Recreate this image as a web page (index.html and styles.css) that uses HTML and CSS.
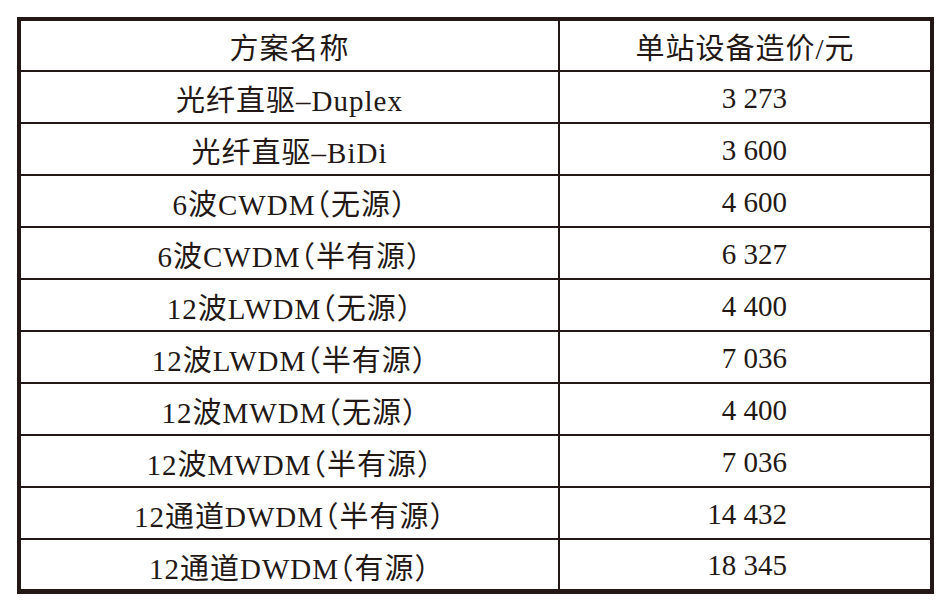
FILE: index.html
```html
<!DOCTYPE html>
<html lang="zh">
<head>
<meta charset="utf-8">
<link rel="stylesheet" href="styles.css">
</head>
<body>
<div class="table">
  <div class="cell head">方案名称</div><div class="cell head">单站设备造价/元</div>
  <div class="cell">光纤直驱–Duplex</div><div class="cell num">3 273</div>
  <div class="cell">光纤直驱–BiDi</div><div class="cell num">3 600</div>
  <div class="cell">6波CWDM<span class="lp">（</span>无源<span class="rp">）</span></div><div class="cell num">4 600</div>
  <div class="cell">6波CWDM<span class="lp">（</span>半有源<span class="rp">）</span></div><div class="cell num">6 327</div>
  <div class="cell">12波LWDM<span class="lp">（</span>无源<span class="rp">）</span></div><div class="cell num">4 400</div>
  <div class="cell">12波LWDM<span class="lp">（</span>半有源<span class="rp">）</span></div><div class="cell num">7 036</div>
  <div class="cell">12波MWDM<span class="lp">（</span>无源<span class="rp">）</span></div><div class="cell num">4 400</div>
  <div class="cell">12波MWDM<span class="lp">（</span>半有源<span class="rp">）</span></div><div class="cell num">7 036</div>
  <div class="cell">12通道DWDM<span class="lp">（</span>半有源<span class="rp">）</span></div><div class="cell num">14 432</div>
  <div class="cell">12通道DWDM<span class="lp">（</span>有源<span class="rp">）</span></div><div class="cell num">18 345</div>
</div>
</body>
</html>
```
FILE: styles.css
```css
html, body {
  margin: 0;
  padding: 0;
  background: #ffffff;
}
.table {
  margin: 17px 0 0 17px;
  width: 917px;
  box-sizing: border-box;
  background: #231815;
  padding: 4px 4px 5px 4px;
  display: grid;
  grid-template-columns: 537px 370px;
  column-gap: 2px;
  row-gap: 2px;
  grid-template-rows: 49px repeat(9, 50px) 49px;
}
.cell {
  background: #ffffff;
  display: flex;
  align-items: center;
  justify-content: center;
  font-family: "Liberation Serif", "Noto Sans CJK SC", serif;
  font-size: 29px;
  letter-spacing: 1px;
  color: #231815;
  padding-top: 2px;
  box-sizing: border-box;
  white-space: pre;
}
.lp,
.rp {
  font-family: "Noto Sans CJK SC", serif;
  font-feature-settings: "halt" 1;
}
.num {
  letter-spacing: 0;
  justify-content: flex-end;
  padding-right: 143px;
}
.head {
  padding-top: 0;
}
.head.num {
  justify-content: center;
  padding-right: 0;
}
```
